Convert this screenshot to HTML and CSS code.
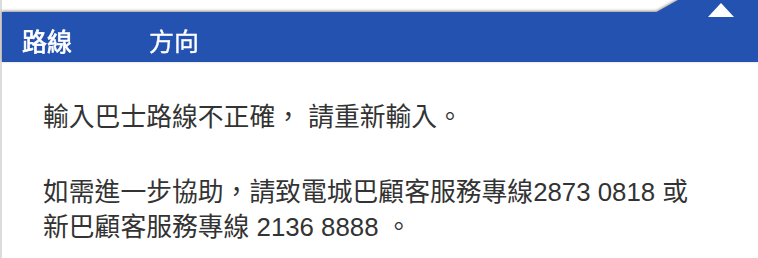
FILE: index.html
```html
<!DOCTYPE html>
<html lang="zh-Hant">
<head>
<meta charset="utf-8">
<title>路線</title>
<link rel="stylesheet" href="styles.css">
</head>
<body>
<div class="panel">
  <div class="header">
    <div class="tab"></div>
    <div class="caret"></div>
    <div class="bar">
      <span class="label label-route">路線</span>
      <span class="label">方向</span>
    </div>
  </div>
  <div class="content">
    <p class="msg">輸入巴士路線不正確， 請重新輸入。</p>
    <p class="msg">如需進一步協助，請致電城巴顧客服務專線2873 0818 或<br>新巴顧客服務專線 2136 8888 。</p>
  </div>
</div>
</body>
</html>
```

FILE: styles.css
```css
html, body {
  margin: 0;
  padding: 0;
  background: #ffffff;
}

body {
  width: 758px;
  height: 258px;
  overflow: hidden;
  font-family: "Liberation Sans", "Noto Sans CJK TC", sans-serif;
}

.panel {
  border-left: 2px solid #dcdcdc;
  height: 258px;
  box-sizing: border-box;
}

.header {
  position: relative;
  padding-top: 12px;
  filter: drop-shadow(0 -1px 1.5px rgba(0, 0, 0, 0.45));
}

.tab {
  position: absolute;
  top: 0;
  left: 649px;
  width: 110px;
  height: 14px;
  background: #2352b0;
  clip-path: polygon(2px 100%, 27px 0, 100% 0, 100% 100%);
}

.caret {
  position: absolute;
  z-index: 2;
  top: 3px;
  left: 706px;
  width: 0;
  height: 0;
  border-left: 13px solid transparent;
  border-right: 13px solid transparent;
  border-bottom: 14px solid #ffffff;
}

.bar {
  position: relative;
  height: 50px;
  background: #2352b0;
  display: flex;
  align-items: center;
  padding-left: 20px;
  box-sizing: border-box;
}

.label {
  color: #ffffff;
  font-family: "Noto Sans CJK TC", sans-serif;
  font-size: 25px;
  font-weight: 400;
  line-height: 30px;
  padding-top: 5px;
  -webkit-text-stroke: 0.35px #ffffff;
}

.label-route {
  width: 127px;
  -webkit-text-stroke: 0.7px #ffffff;
}

.content {
  padding: 38px 0 0 41px;
  color: #333333;
  font-size: 25.8px;
  line-height: 35px;
}

.msg {
  margin: 0 0 40px 0;
}
```
